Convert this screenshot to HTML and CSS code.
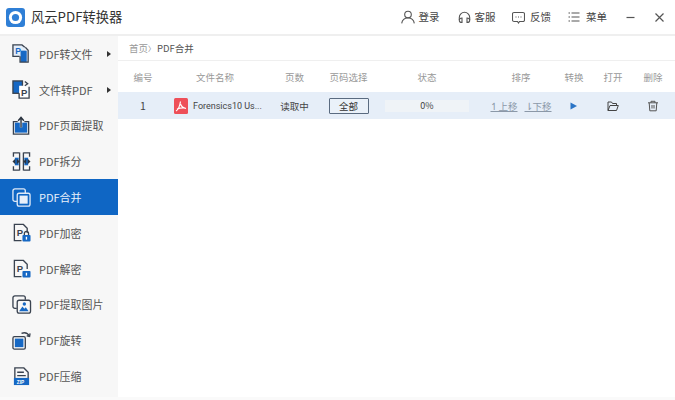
FILE: index.html
```html
<!DOCTYPE html>
<html lang="zh">
<head>
<meta charset="utf-8">
<title>风云PDF转换器</title>
<link rel="stylesheet" href="styles.css">
</head>
<body>
<div class="app">
  <header class="titlebar">
    <div class="brand">
      <svg class="logo" viewBox="0 0 19 19"><rect width="19" height="19" rx="3" fill="#2f7fd6"/><circle cx="9.500" cy="9.500" r="6.600" fill="#fff"/><circle cx="9.500" cy="9.500" r="3.600" fill="#2f7fd6"/></svg>
      <span class="brand-name">风云PDF转换器</span>
    </div>
    <nav class="tools">
      <span class="tool t1"><svg viewBox="0 0 14 14"><circle cx="7" cy="4.500" r="3.300"/><path d="M.7 13.300c.5-3.300 2.800-5.300 6.300-5.300s5.800 2 6.300 5.300"/></svg>登录</span>
      <span class="tool t2"><svg viewBox="0 0 13 13"><path d="M1.300 9V6.500a5.200 5.200 0 0 1 10.400 0V9"/><path d="M4 7v4.500C2.500 11.500 1.300 10.700 1.300 9.200S2.500 7 4 7zM9 7v4.500c1.500 0 2.700-.8 2.700-2.300S10.500 7 9 7z"/></svg>客服</span>
      <span class="tool t3"><svg viewBox="0 0 13 13"><path d="M2 1.500h9A1.500 1.500 0 0 1 12.500 3v6A1.500 1.500 0 0 1 11 10.500H7.500l-1 1.500-1-1.500H2A1.500 1.500 0 0 1 .5 9V3A1.500 1.500 0 0 1 2 1.500z"/><path d="M3.500 6h1M6 6h1M8.500 6h1"/></svg>反馈</span>
      <span class="tool t4"><svg viewBox="0 0 12 12"><path d="M.5 2h1.500M3.500 2h8M.5 6h1.500M3.500 6h8M.5 10h1.500M3.500 10h8"/></svg>菜单</span>
      <svg class="winbtn wmin" viewBox="0 0 11 11"><path d="M1.500 5.500h8"/></svg>
      <svg class="winbtn wclose" viewBox="0 0 11 11"><path d="M1.500 1.500l8 8M9.500 1.500l-8 8"/></svg>
    </nav>
  </header>
  <div class="body">
    <aside class="sidebar">
      <div class="item"><svg class="ico" viewBox="0 0 20 20"><path class="t" d="M1 1h9.500l3.500 3v9H1z"/><rect class="b" x="9" y="7" width="6.500" height="12"/><path class="s" d="M14 3.500l3 3V19H8.500v-6"/><path class="s" d="M8 13H1V1h9.500l3 2.500"/><text x="3.500" y="10" class="gl">P</text></svg><span>PDF转文件</span><i class="arrow"></i></div>
      <div class="item"><svg class="ico" viewBox="0 0 20 20"><rect class="b" x="1" y="1" width="10" height="13"/><rect class="s" x="1" y="1" width="10" height="13"/><path class="f" d="M7.500 6H14l4 4v9H7.500z"/><path class="s" d="M7.500 14v5H18V7"/><path class="s" d="M13.500 1.500l3 2.500-3 2"/><text x="9.500" y="16.500" class="gd">P</text></svg><span>文件转PDF</span><i class="arrow"></i></div>
      <div class="item"><svg class="ico" viewBox="0 0 20 20"><path class="s" d="M6 6H1.500v13h16V6H13"/><rect class="b" x="3" y="7" width="13" height="10.500"/><path class="w" d="M9.500 12V2"/><path class="k" d="M9.500 12V2M6.500 5l3-3.500 3 3.500"/></svg><span>PDF页面提取</span></div>
      <div class="item"><svg class="ico" viewBox="0 0 20 20"><path class="s" d="M8 1H1.500v4M1.500 15v4H8M12 1h6.500v4M18.500 15v4H12M8 .5v19M12 .5v19"/><rect class="b" x="3" y="6" width="4" height="8"/><rect class="b" x="13" y="6" width="4" height="8"/><path class="a" d="M.5 10l3-3v6zM19.500 10l-3-3v6zM8 10l-3-3v6zM12 10l3-3v6z"/></svg><span>PDF拆分</span></div>
      <div class="item active"><svg class="ico" viewBox="0 0 20 20"><path class="sw" d="M5.500 14H3a2 2 0 0 1-2-2V3a2 2 0 0 1 2-2h9a2 2 0 0 1 2 2v2.500"/><rect class="sw" x="5.500" y="5.500" width="13.500" height="13.500" rx="2"/><rect x="8" y="8" width="8.500" height="8.500" fill="#e8eff9"/></svg><span>PDF合并</span></div>
      <div class="item"><svg class="ico" viewBox="0 0 20 20"><path class="s" d="M10 18.500H2.500v-17H12l4 4v5"/><text x="5" y="13.500" class="gd">P</text><rect class="b" x="11" y="12.500" width="8.500" height="7" rx="1"/><path class="s" d="M13 12.500v-1.500a2.200 2.200 0 0 1 4.400 0v1.500"/><rect x="14.500" y="14.500" width="1.400" height="3" fill="#fff"/></svg><span>PDF加密</span></div>
      <div class="item"><svg class="ico" viewBox="0 0 20 20"><path class="s" d="M10 18.500H2.500v-17H12l4 4v5"/><text x="5" y="13.500" class="gd">P</text><rect class="b" x="11" y="12.500" width="8.500" height="7" rx="1"/><rect x="14.500" y="14.500" width="1.400" height="3" fill="#fff"/></svg><span>PDF解密</span></div>
      <div class="item"><svg class="ico" viewBox="0 0 20 20"><path class="s" d="M5 14H3a2 2 0 0 1-2-2V3a2 2 0 0 1 2-2h9a2 2 0 0 1 2 2v2"/><rect class="s" x="5.500" y="5.500" width="14" height="13.500" rx="2"/><path class="a2" d="M7.500 17l3.500-5 2 2.500 1.500-1.500 3 4z"/><circle class="a2" cx="13" cy="9.500" r="1.800"/></svg><span>PDF提取图片</span></div>
      <div class="item"><svg class="ico" viewBox="0 0 20 20"><rect class="s" x="1" y="6" width="13" height="13" rx="1.500"/><rect class="b" x="3" y="8" width="9" height="9"/><path class="s" d="M10 2.500c3.500-1.500 6.500-.5 8.500 3"/><path class="s" d="M19 2.500l-.5 3.300-3-.8"/></svg><span>PDF旋转</span></div>
      <div class="item"><svg class="ico" viewBox="0 0 20 20"><path class="s" d="M3 12V1h9.500L17 5.500V12"/><path class="s" d="M5.500 5.500h7M5.500 9h9"/><rect class="b" x="2" y="11.500" width="16" height="7.500"/><text x="5" y="17.500" class="zp">ZIP</text></svg><span>PDF压缩</span></div>
    </aside>
    <main class="content">
      <div class="crumbs"><span class="home">首页</span><span class="sep">〉</span><span>PDF合并</span></div>
      <div class="table">
        <div class="row head">
          <span class="c-num">编号</span><span class="c-name">文件名称</span><span class="c-pages">页数</span><span class="c-sel">页码选择</span><span class="c-status">状态</span><span class="c-sort">排序</span><span class="c-conv">转换</span><span class="c-open">打开</span><span class="c-del">删除</span>
        </div>
        <div class="row data">
          <span class="c-num num">1</span>
          <span class="c-name file"><svg class="pdf" viewBox="0 0 14 16"><rect width="14" height="16" rx="1.500" fill="#ee4f58"/><path d="M2 13c2-1 3.500-3.500 4.500-9.500M6.500 6c.8 2.500 2.500 4 5.500 4.500M3 11c2.500-1 5.500-1.500 8.500-1" fill="none" stroke="#fff" stroke-width="1.200"/></svg><span>Forensics10 Us...</span></span>
          <span class="c-pages dark">读取中</span>
          <span class="c-sel"><button class="all">全部</button></span>
          <span class="c-status"><span class="bar">0%</span></span>
          <span class="c-sort sort"><u>↿上移</u><u>⇂下移</u></span>
          <span class="c-conv"><svg class="act" viewBox="0 0 12 12"><path d="M2.500 2.500L9 6l-6.500 3.500z" fill="#2a74c6"/></svg></span>
          <span class="c-open"><svg class="act" viewBox="0 0 12 12"><path d="M1 10.500V2h3.500l1 1.500H9.500V5.500M1 10.500h8.500L11.300 5.500H3L1 10.500z" fill="none" stroke="#444" stroke-width="1"/></svg></span>
          <span class="c-del"><svg class="act" viewBox="0 0 12 12"><path d="M1 2.800h10M4 2.800V1.300h4v1.500M2.200 2.800l.6 8h6.400l.6-8M5 5v3.500M7 5v3.500" fill="none" stroke="#555" stroke-width="1"/></svg></span>
        </div>
      </div>
    </main>
  </div>
</div>
</body>
</html>
```
FILE: styles.css
```css
* { box-sizing: border-box; }
html, body { margin: 0; padding: 0; }
body { width: 675px; height: 400px; overflow: hidden; background: #fff; font-family: "Noto Sans CJK SC", "Noto Sans", sans-serif; color: #333; }
.app { display: flex; flex-direction: column; height: 400px; padding-bottom: 3px; background: #fafafa; }
.titlebar { height: 36px; flex: none; display: flex; align-items: center; justify-content: space-between; border-bottom: 2px solid #efefef; padding: 0 10px 0 6px; background: #fff; }
.brand { display: flex; align-items: center; gap: 6px; }
.logo { width: 19px; height: 19px; }
.brand-name { font-size: 13.300px; color: #333; line-height: 22px; }
.tools { display: flex; align-items: center; font-size: 10.500px; color: #444; }
.tool { display: flex; align-items: center; gap: 4px; line-height: 16px; }
.tool svg { width: 13px; height: 13px; fill: none; stroke: #555; stroke-width: 1.100; }
.t1 svg { width: 14px; height: 14px; }
.t3 { gap: 5px; }
.t4 { gap: 6px; }
.t4 svg { width: 12px; height: 12px; }
.t1 { margin-right: 18px; }
.t2 { margin-right: 16.500px; }
.t3 { margin-right: 17px; }
.t4 { margin-right: 18px; }
.winbtn { width: 11px; height: 11px; fill: none; stroke: #555; stroke-width: 1.200; }
.wmin { margin-right: 18px; }
.body { flex: 1; display: flex; min-height: 0; }
.sidebar { width: 118px; flex: none; background: #f7f7f7; display: flex; flex-direction: column; }
.item { height: 35.800px; flex: none; display: flex; align-items: center; padding-left: 12px; font-size: 11px; color: #555; position: relative; }
.item.active { background: #0f66c4; color: #e9f1fb; }
.item > span { margin-left: 8px; white-space: nowrap; }
.ico { width: 19px; height: 19px; flex: none; overflow: visible; }
.ico .s { fill: none; stroke: #3a4350; stroke-width: 1.400; }
.ico .k { fill: none; stroke: #2b3440; stroke-width: 1.500; }
.ico .t { fill: #e3edf9; }
.ico .f { fill: #fff; }
.ico .sw { fill: none; stroke: #dfe9f7; stroke-width: 1.400; }
.ico .b { fill: #1668c4; }
.ico .a { fill: #2b3440; }
.ico .a2 { fill: #1668c4; }
.ico .w { fill: none; stroke: #fff; stroke-width: 2.500; }
.ico .gl { font: bold 9px "Liberation Sans", sans-serif; fill: #1668c4; }
.ico .gd { font: bold 10px "Liberation Sans", sans-serif; fill: #3a4350; }
.ico .zp { font: bold 5px "Liberation Sans", sans-serif; fill: #fff; }
.arrow { position: absolute; left: 107px; top: 50%; margin-top: -3px; width: 0; height: 0; border-left: 4px solid #333; border-top: 3px solid transparent; border-bottom: 3px solid transparent; }
.content { flex: 1; min-width: 0; background: #fff; }
.crumbs { height: 25px; border-bottom: 1px solid #efefef; padding: 0 0 0 11px; display: flex; align-items: center; font-size: 9.500px; color: #555; line-height: 14px; }
.home { color: #999; }
.sep { width: 9px; font-size: 7px; color: #888; overflow: hidden; }
.row { display: flex; align-items: center; font-size: 9.500px; text-align: center; }
.row > span { flex: none; display: block; }
.head { height: 31px; color: #999; }
.data { height: 27px; background: #e6eef8; color: #444; }
.c-num { width: 50px; }
.c-name { width: 94px; }
.c-pages { width: 65px; }
.c-sel { width: 43px; }
.c-status { width: 114px; }
.c-sort { width: 74px; }
.c-conv { width: 32px; }
.c-open { width: 46px; }
.c-del { width: 34px; }
.num { font-size: 10.500px; }
.file { display: flex !important; align-items: center; gap: 5px; padding-left: 6px; text-align: left; font-family: Roboto, sans-serif; font-size: 9px; white-space: nowrap; overflow: hidden; }
.pdf { width: 14px; height: 16px; flex: none; }
.dark { color: #444; }
.all { display: block; margin: 0 auto; width: 40px; height: 16px; padding: 0; border: 1px solid #5a6b80; border-radius: 1px; background: #eaf1f9; font: 9.500px "Noto Sans CJK SC", sans-serif; color: #333; line-height: 14px; }
.bar { display: block; width: 84px; margin: 0 auto; height: 12px; line-height: 12px; background: #eff3f7; font-size: 9px; color: #444; }
.sort { display: flex !important; justify-content: center; gap: 7px; color: #8b98a8; font-size: 9.500px; white-space: nowrap; }
.act { width: 12px; height: 12px; display: block; margin: 0 auto; }
```
